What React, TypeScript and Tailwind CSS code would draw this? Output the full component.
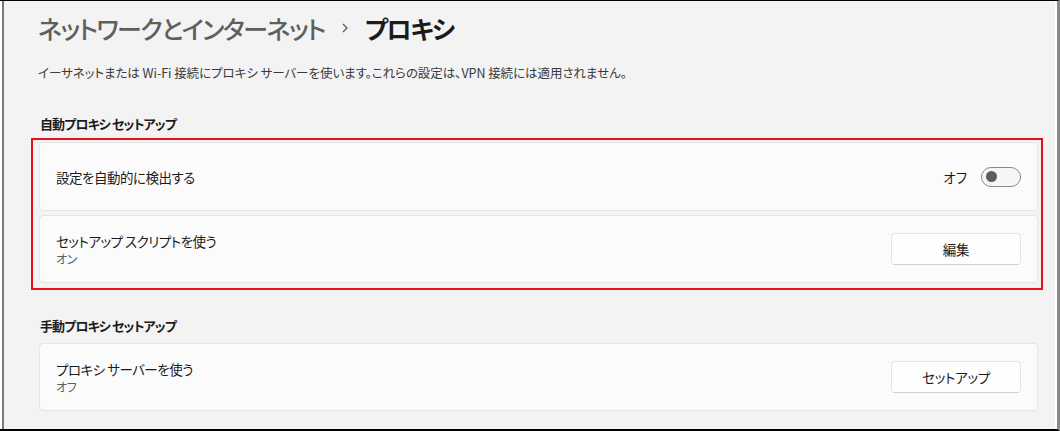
const font = "[font-family:'Noto_Sans_CJK_JP','Noto_Sans',sans-serif] [font-feature-settings:'palt']"

function SettingCard({
	title,
	subtitle,
	children,
	className = "",
}: {
	title: string
	subtitle?: string
	children: React.ReactNode
	className?: string
}) {
	return (
		<div
			className={`flex items-center justify-between rounded-[4px] border border-[#e5e5e5] bg-[#fbfbfb] pl-4 pr-4 ${className}`}
		>
			<div className="flex flex-col">
				<span className="text-[13.5px] leading-[20px] tracking-[-0.5px] text-[#1b1b1b]">{title}</span>
				{subtitle && (
					<span className="text-[12px] leading-[16px] tracking-[-0.3px] text-[#5f5f5f]">{subtitle}</span>
				)}
			</div>
			{children}
		</div>
	)
}

function Button({ label }: { label: string }) {
	return (
		<button className="flex h-[32px] w-[130px] items-center justify-center rounded-[4px] border border-[#e5e5e5] border-b-[#d0d0d0] bg-[#fefefe] text-[13.5px] tracking-[-0.3px] text-[#1b1b1b]">
			{label}
		</button>
	)
}

function Toggle() {
	return (
		<div className="flex items-center gap-[14px]">
			<span className="text-[13.5px] leading-[20px] text-[#1b1b1b]">オフ</span>
			<div className="flex h-[20px] w-[40px] items-center rounded-full border border-[#8a8a8a] bg-[#f6f6f6] pl-[4px]">
				<div className="h-[11px] w-[11px] rounded-full bg-[#5c5c5c]" />
			</div>
		</div>
	)
}

export default function App() {
	return (
		<div className={`flex h-[431px] w-[1060px] border-t border-b-2 border-r-[3px] border-t-black border-b-black border-r-[#8a8a8a] bg-white ${font}`}>
			<div className="ml-[2px] mr-[2px] flex flex-1 flex-col border-l-2 border-[#7a7a7a] bg-[#f3f3f3] pl-[35px] pr-[17px] pt-[9px]">
				<div className="-ml-px flex items-center text-[25px] font-medium leading-[36px] tracking-[-1.5px]">
					<span className="text-[#5f5f5f]">ネットワークとインターネット</span>
					<svg className="ml-[16px] mr-[16px]" width="8" height="12" viewBox="0 0 8 12">
						<path d="M2 2 L6 6 L2 10" fill="none" stroke="#5d5d5d" strokeWidth="1.3" />
					</svg>
					<span className="font-semibold text-[#1b1b1b]">プロキシ</span>
				</div>
				<p className="-ml-px mt-[17px] whitespace-pre text-[12.5px] leading-[20px] tracking-[-0.05px] text-[#3a3a3a]">
					イーサネットまたは Wi-Fi 接続にプロキシ サーバーを使います。これらの設定は、VPN 接続には適用されません。
				</p>
				<h2 className="ml-px mt-[31px] whitespace-pre text-[13px] font-semibold leading-[20px] tracking-[-0.9px] text-[#1b1b1b]">
					自動プロキシ セットアップ
				</h2>
				<div className="relative mt-[8px] flex flex-col gap-[4px]">
					<SettingCard title="設定を自動的に検出する" className="h-[69px]">
						<Toggle />
					</SettingCard>
					<SettingCard title="セットアップ スクリプトを使う" subtitle="オン" className="h-[68px]">
						<Button label="編集" />
					</SettingCard>
					<div className="pointer-events-none absolute -bottom-[7px] -left-[8px] -right-[5px] -top-[4px] border-[2.5px] border-[#e8101c]" />
				</div>
				<h2 className="ml-px mt-[33px] whitespace-pre text-[13px] font-semibold leading-[20px] tracking-[-0.9px] text-[#1b1b1b]">
					手動プロキシ セットアップ
				</h2>
				<SettingCard title="プロキシ サーバーを使う" subtitle="オフ" className="mt-[7px] h-[68px]">
					<Button label="セットアップ" />
				</SettingCard>
			</div>
		</div>
	)
}
